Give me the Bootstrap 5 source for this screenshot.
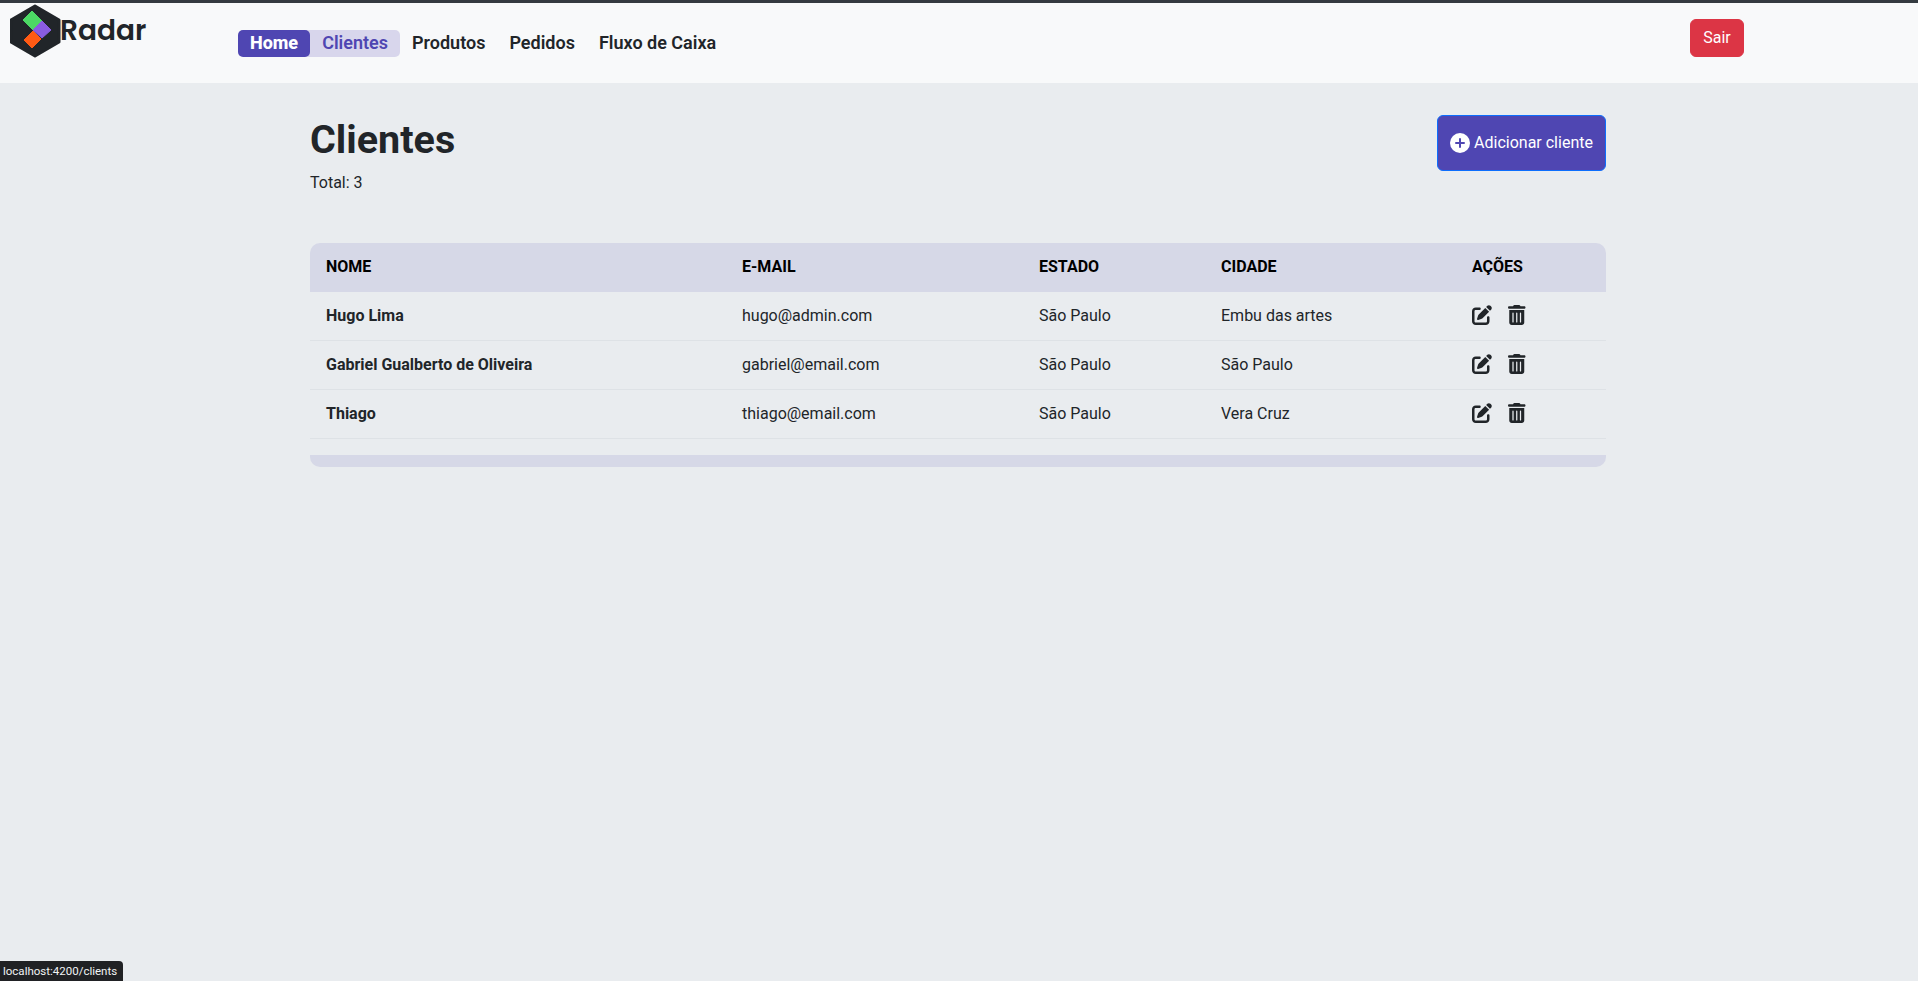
<!DOCTYPE html>
<html lang="pt-BR">

<head>
  <meta charset="UTF-8" />
  <meta name="viewport" content="width=device-width, initial-scale=1.0" />
  <title>Radar - Clientes</title>
  <link href="https://cdn.jsdelivr.net/npm/bootstrap@5.3.0/dist/css/bootstrap.min.css" rel="stylesheet" />
  <style>
    body {
      background: #e9ecef;
      font-family: Roboto, sans-serif;
      color: #212529;
      min-height: 981px;
    }

    .top-line {
      height: 3px;
      background: #343a40;
    }

    .radar-nav {
      height: 80px;
      padding: 0;
      align-items: flex-start;
    }

    .radar-brand {
      width: 238px;
      padding: 1px 0 0 10px;
      font-family: Poppins, Inter, sans-serif;
      font-size: 28px;
      font-weight: 600;
      line-height: 42px;
      color: #212529;
    }

    .radar-brand span {
      margin: 6px 0 0 -2px;
    }

    .radar-links {
      padding-top: 27px;
    }

    .radar-link {
      display: block;
      height: 27px;
      padding: 0 12px;
      font-size: 18px;
      font-weight: 600;
      line-height: 26px;
      color: #212529;
      text-decoration: none;
    }

    .radar-link.is-home {
      position: relative;
      background: #4f46b2;
      color: #fff;
      font-weight: 800;
      border-radius: 5px;
    }

    .radar-link.is-current {
      background: #d8d6ec;
      color: #4f46b2;
      margin-left: -5px;
      padding-left: 17px;
      border-radius: 0 5px 5px 0;
    }

    .btn-sair {
      margin: 16px 174px 0 0;
      width: 54px;
      height: 38px;
    }

    .clients-page {
      padding: 33px 13px 0 11px;
    }

    .clients-title {
      font-size: 39.5px;
      font-weight: 700;
      line-height: 48px;
      margin: 0 0 7px;
    }

    .btn-add {
      width: 169px;
      height: 56px;
      margin-top: -1px;
      background: #4f46b2;
      color: #fff;
      border: 1px solid #0d6efd;
      border-radius: 6px;
      padding: 0;
    }

    .btn-add:hover {
      background: #4f46b2;
      color: #fff;
      border-color: #0d6efd;
    }

    .clients-table {
      table-layout: fixed;
      margin: 48px 0 0;
      --bs-table-bg: transparent;
      border-collapse: separate;
      border-spacing: 0;
    }

    .clients-table th {
      height: 49px;
      background: #d6d8e7;
      color: #000;
      text-transform: uppercase;
      vertical-align: middle;
      border: 0;
      padding: 0 16px 2px;
    }

    .clients-table th:first-child {
      border-top-left-radius: 10px;
    }

    .clients-table th:last-child {
      border-top-right-radius: 10px;
    }

    .clients-table td {
      height: 49px;
      vertical-align: middle;
      padding: 0 16px;
      border-bottom: 1px solid #dee2e6;
    }

    .col-nome { width: 416px; }
    .col-email { width: 297px; }
    .col-estado { width: 182px; }
    .col-cidade { width: 251px; }
    .col-acoes { width: 150px; }

    .table-foot {
      height: 12px;
      margin-top: 16px;
      background: #d6d8e7;
      border-radius: 0 0 10px 10px;
    }

    .row-actions {
      margin-bottom: 2px;
    }

    .row-icon {
      display: block;
      height: 20px;
      fill: #212529;
    }

    .url-status {
      position: fixed;
      left: 0;
      bottom: 0;
      height: 20px;
      padding: 0 6px 0 3px;
      background: #202124;
      color: #f1f3f4;
      border-top-right-radius: 4px;
      font-family: Roboto, sans-serif;
      font-size: 11.5px;
      line-height: 20px;
    }
  </style>
</head>

<body>
  <div class="top-line"></div>
  <nav class="navbar radar-nav bg-light">
    <a class="radar-brand d-flex text-decoration-none" href="#">
      <svg width="52" height="54" viewBox="10 3 52 54">
        <path d="M35 5 59 19V41L35 55 11 41V19Z" fill="#212529" stroke="#212529" stroke-width="3" stroke-linejoin="round" />
        <path d="M32 10 42 20 33 29 23 19Z" fill="#4cd964" stroke="#4cd964" stroke-linejoin="round" />
        <path d="M42 20 51 29 42 37 33 29Z" fill="#8a5ce0" stroke="#8a5ce0" stroke-linejoin="round" />
        <path d="M33 30 41 38 32 47 24 39Z" fill="#ff5a14" stroke="#ff5a14" stroke-linejoin="round" />
      </svg>
      <span>Radar</span>
    </a>
    <div class="radar-links d-flex flex-grow-1">
      <a class="radar-link is-home" href="#">Home</a>
      <a class="radar-link is-current" href="#">Clientes</a>
      <a class="radar-link" href="#">Produtos</a>
      <a class="radar-link" href="#">Pedidos</a>
      <a class="radar-link" href="#">Fluxo de Caixa</a>
    </div>
    <button class="btn btn-danger btn-sair p-0" type="button">Sair</button>
  </nav>

  <main class="container clients-page">
    <div class="d-flex justify-content-between align-items-start">
      <div>
        <h1 class="clients-title">Clientes</h1>
        <p class="mb-0">Total: 3</p>
      </div>
      <button class="btn btn-add d-flex align-items-center justify-content-center gap-1" type="button">
        <svg width="20" height="20" viewBox="0 0 20 20">
          <circle cx="10" cy="10" r="10" fill="#fff" />
          <path d="M10 6v8M6 10h8" stroke="#4f46b2" stroke-width="2" stroke-linecap="round" />
        </svg>
        <span>Adicionar cliente</span>
      </button>
    </div>

    <table class="table clients-table">
      <thead>
        <tr>
          <th class="col-nome">Nome</th>
          <th class="col-email">E-mail</th>
          <th class="col-estado">Estado</th>
          <th class="col-cidade">Cidade</th>
          <th class="col-acoes">Ações</th>
        </tr>
      </thead>
      <tbody id="client-rows"></tbody>
    </table>
    <div class="table-foot"></div>
  </main>

  <div class="url-status">localhost:4200/clients</div>

  <script>
    const clients = [
      { nome: 'Hugo Lima', email: 'hugo@admin.com', estado: 'São Paulo', cidade: 'Embu das artes' },
      { nome: 'Gabriel Gualberto de Oliveira', email: 'gabriel@email.com', estado: 'São Paulo', cidade: 'São Paulo' },
      { nome: 'Thiago', email: 'thiago@email.com', estado: 'São Paulo', cidade: 'Vera Cruz' }
    ];

    const editIcon = '<svg class="row-icon" viewBox="0 0 512 512"><path d="M471.6 21.7c-21.9-21.9-57.3-21.9-79.2 0L362.3 51.7l97.9 97.9 30.1-30.1c21.9-21.9 21.9-57.3 0-79.2L471.6 21.7zm-299.2 220c-6.1 6.1-10.8 13.6-13.5 21.9l-29.6 88.8c-2.9 8.6-.6 18.1 5.8 24.6s15.9 8.7 24.6 5.8l88.8-29.6c8.2-2.7 15.7-7.4 21.9-13.5L437.7 172.3 339.7 74.3 172.4 241.7zM96 64C43 64 0 107 0 160V416c0 53 43 96 96 96H352c53 0 96-43 96-96V320c0-17.7-14.3-32-32-32s-32 14.3-32 32v96c0 17.7-14.3 32-32 32H96c-17.7 0-32-14.3-32-32V160c0-17.7 14.3-32 32-32h96c17.7 0 32-14.3 32-32s-14.3-32-32-32H96z"/></svg>';
    const trashIcon = '<svg class="row-icon" viewBox="0 0 448 512"><path d="M135.2 17.7C140.6 6.8 151.7 0 163.8 0H284.2c12.1 0 23.2 6.8 28.6 17.7L320 32h96c17.7 0 32 14.3 32 32s-14.3 32-32 32H32C14.3 96 0 81.7 0 64S14.3 32 32 32h96l7.2-14.3zM32 128H416V448c0 35.3-28.7 64-64 64H96c-35.3 0-64-28.7-64-64V128zm96 64c-8.8 0-16 7.2-16 16V432c0 8.8 7.2 16 16 16s16-7.2 16-16V208c0-8.8-7.2-16-16-16zm96 0c-8.8 0-16 7.2-16 16V432c0 8.8 7.2 16 16 16s16-7.2 16-16V208c0-8.8-7.2-16-16-16zm96 0c-8.8 0-16 7.2-16 16V432c0 8.8 7.2 16 16 16s16-7.2 16-16V208c0-8.8-7.2-16-16-16z"/></svg>';

    document.getElementById('client-rows').innerHTML = clients.map(c => `
      <tr>
        <td class="fw-bold">${c.nome}</td>
        <td>${c.email}</td>
        <td>${c.estado}</td>
        <td>${c.cidade}</td>
        <td><div class="d-flex gap-3 row-actions">${editIcon}${trashIcon}</div></td>
      </tr>`).join('');
  </script>
  <script src="https://cdn.jsdelivr.net/npm/bootstrap@5.3.0/dist/js/bootstrap.bundle.min.js"></script>
</body>

</html>
